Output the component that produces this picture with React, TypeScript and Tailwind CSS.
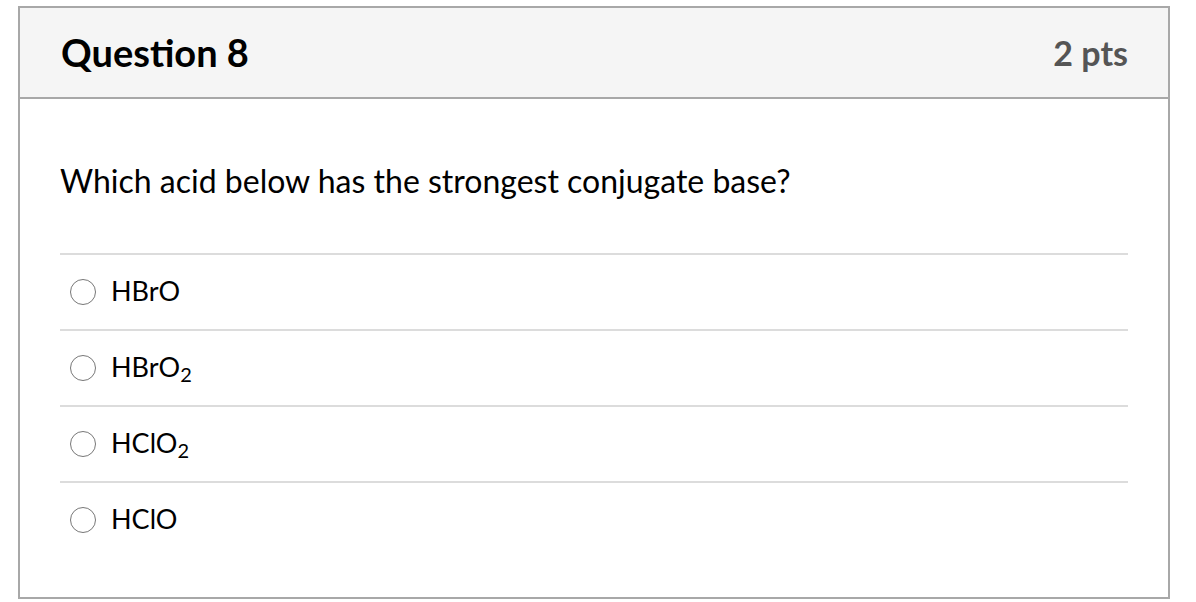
import React from "react"

const options = [
  { id: "a", label: <>HBrO</> },
  { id: "b", label: <>HBrO<sub className="text-[20px]">2</sub></> },
  { id: "c", label: <>HClO<sub className="text-[20px]">2</sub></> },
  { id: "d", label: <>HClO</> },
]

export default function App() {
  return (
    <div className="w-[1196px] h-[602px] bg-white pt-[6px] pl-[18px] font-['Lato','Liberation_Sans',sans-serif]">
      <div className="w-[1152px] h-[593px] border-2 border-[#a8a8a8] flex flex-col">
        <div className="h-[91px] shrink-0 bg-[#f5f5f5] border-b-2 border-[#a8a8a8] flex items-center justify-between pl-[41px] pr-[40px]">
          <h2 className="text-[38px] font-bold text-black">Question 8</h2>
          <div className="text-[34px] font-bold text-[#555]">2 pts</div>
        </div>

        <div className="flex-1 px-[40px] pt-[61px] pb-[40px]">
          <p className="text-[32px] leading-[42px] text-black mb-[51px]">
            Which acid below has the strongest conjugate base?
          </p>
          <div>
            {options.map((o) => (
              <label
                key={o.id}
                className="h-[76px] border-t-2 border-[#dcdcdc] flex items-center pl-[10px] gap-[15px] cursor-pointer"
              >
                <span className="w-[26px] h-[26px] rounded-full border-[1.5px] border-[#777] bg-white shrink-0" />
                <span className="text-[27px] text-black leading-none mb-[4px]">{o.label}</span>
              </label>
            ))}
          </div>
        </div>
      </div>
    </div>
  )
}
